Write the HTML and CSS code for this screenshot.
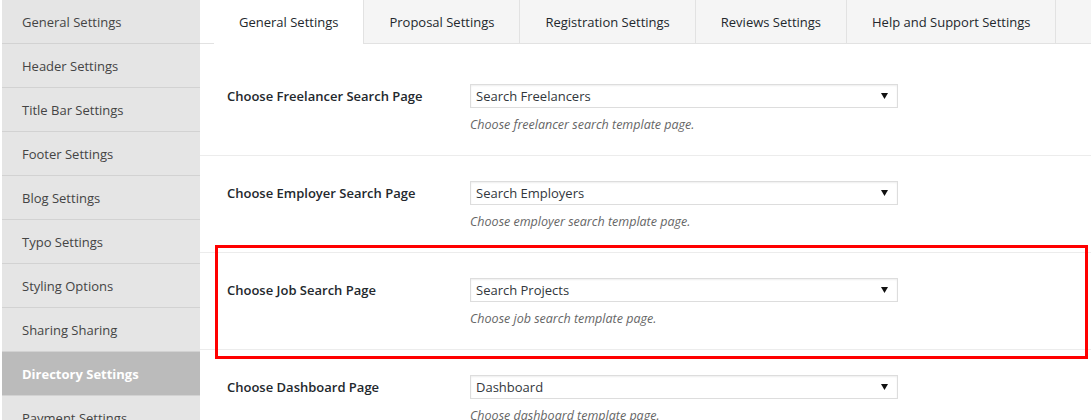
FILE: index.html
```html
<!DOCTYPE html>
<html lang="en">
<head>
    <meta charset="UTF-8">
    <meta name="viewport" content="width=device-width, initial-scale=1.0">
    <title>Theme Settings</title>
    <link rel="stylesheet" href="styles.css">
</head>
<body>
    <div class="wrapper">
        <ul class="sidebar">
            <li><a href="#">General Settings</a></li>
            <li><a href="#">Header Settings</a></li>
            <li><a href="#">Title Bar Settings</a></li>
            <li><a href="#">Footer Settings</a></li>
            <li><a href="#">Blog Settings</a></li>
            <li><a href="#">Typo Settings</a></li>
            <li><a href="#">Styling Options</a></li>
            <li><a href="#">Sharing Sharing</a></li>
            <li class="active"><a href="#">Directory Settings</a></li>
            <li><a href="#">Payment Settings</a></li>
        </ul>

        <div class="main">
            <div class="tabs">
                <a href="#" class="tab active">General Settings</a>
                <a href="#" class="tab">Proposal Settings</a>
                <a href="#" class="tab">Registration Settings</a>
                <a href="#" class="tab">Reviews Settings</a>
                <a href="#" class="tab">Help and Support Settings</a>
            </div>

            <div class="form">
                <div class="row first">
                    <label class="label">Choose Freelancer Search Page</label>
                    <div class="field">
                        <div class="select">
                            <span>Search Freelancers</span>
                            <svg width="7" height="6" viewBox="0 0 7 6"><path d="M0 0h7L3.5 6z" fill="#111"/></svg>
                        </div>
                        <p class="desc">Choose freelancer search template page.</p>
                    </div>
                </div>

                <div class="row">
                    <label class="label">Choose Employer Search Page</label>
                    <div class="field">
                        <div class="select">
                            <span>Search Employers</span>
                            <svg width="7" height="6" viewBox="0 0 7 6"><path d="M0 0h7L3.5 6z" fill="#111"/></svg>
                        </div>
                        <p class="desc">Choose employer search template page.</p>
                    </div>
                </div>

                <div class="row marked">
                    <label class="label">Choose Job Search Page</label>
                    <div class="field">
                        <div class="select">
                            <span>Search Projects</span>
                            <svg width="7" height="6" viewBox="0 0 7 6"><path d="M0 0h7L3.5 6z" fill="#111"/></svg>
                        </div>
                        <p class="desc">Choose job search template page.</p>
                    </div>
                </div>

                <div class="row">
                    <label class="label">Choose Dashboard Page</label>
                    <div class="field">
                        <div class="select">
                            <span>Dashboard</span>
                            <svg width="7" height="6" viewBox="0 0 7 6"><path d="M0 0h7L3.5 6z" fill="#111"/></svg>
                        </div>
                        <p class="desc">Choose dashboard template page.</p>
                    </div>
                </div>
            </div>
        </div>
    </div>
</body>
</html>
```

FILE: styles.css
```css
body{
    margin: 0;
    font-family: "Open Sans", "Noto Sans", sans-serif;
    font-size: 13px;
    color: #23282d;
    background: #fff;
    overflow: hidden;
}
a{
    text-decoration: none;
    color: inherit;
}
.wrapper{
    display: flex;
    padding-left: 2px;
    min-height: 420px;
}

/* left menu */
.sidebar{
    width: 198px;
    flex-shrink: 0;
    margin: 0;
    padding: 0;
    list-style: none;
    background: #e5e5e5;
}
.sidebar li{
    height: 43px;
    border-bottom: 1px solid #d2d2d2;
}
.sidebar a{
    display: flex;
    align-items: center;
    height: 100%;
    padding-left: 20px;
    color: #444;
}
.sidebar .active{
    background: #bbb;
}
.sidebar .active a{
    color: #fff;
    font-weight: 700;
}

/* tabs */
.main{
    flex: 1;
    min-width: 0;
}
.tabs{
    display: flex;
    height: 43px;
    padding-left: 14px;
    background: linear-gradient(to right, #fff 14px, #f5f5f5 14px);
    border-bottom: 1px solid #e2e2e2;
}
.tab{
    display: flex;
    align-items: center;
    flex-shrink: 0;
    white-space: nowrap;
    padding: 0 25px;
    border-right: 1px solid #e2e2e2;
    color: #23282d;
}
.tab.active{
    background: #fff;
    height: 44px;
}

/* settings rows */
.row{
    display: flex;
    padding: 25px 0 20px 27px;
    border-bottom: 1px solid #ececec;
}
.row.first{
    padding-top: 40px;
}
.row.marked{
    position: relative;
}
.row.marked::after{
    content: "";
    position: absolute;
    top: -8px;
    bottom: -10px;
    left: 15px;
    right: 3px;
    border: 3px solid #f00;
}
.label{
    width: 243px;
    flex-shrink: 0;
    line-height: 24px;
    font-weight: 600;
}
.field{
    width: 428px;
}
.select{
    display: flex;
    align-items: center;
    justify-content: space-between;
    box-sizing: border-box;
    height: 24px;
    padding: 0 9px 0 5px;
    border: 1px solid #ddd;
    box-shadow: inset 0 1px 2px rgba(0,0,0,.07);
    color: #32373c;
}
.desc{
    margin: 7px 0 0;
    line-height: 20px;
    font-size: 12.5px;
    font-style: italic;
    color: #666;
}
```
